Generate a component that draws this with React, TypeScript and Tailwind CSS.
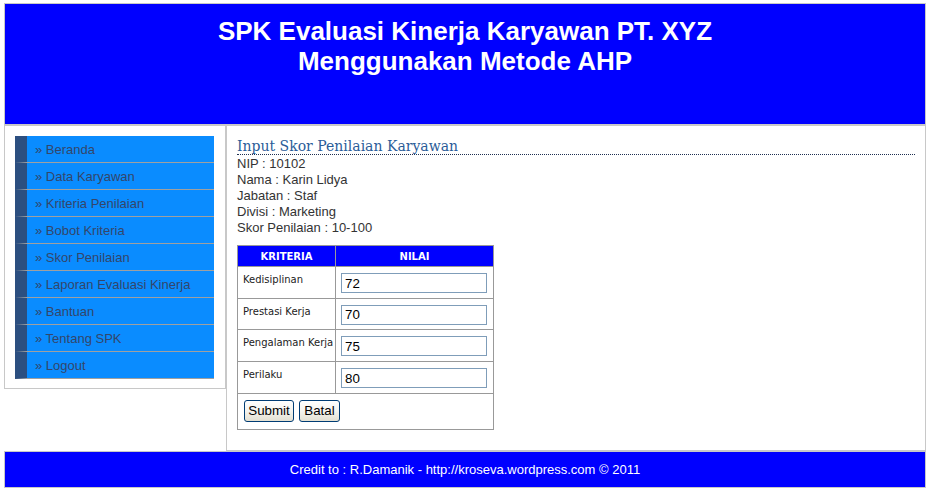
const menu = [
  'Beranda',
  'Data Karyawan',
  'Kriteria Penilaian',
  'Bobot Kriteria',
  'Skor Penilaian',
  'Laporan Evaluasi Kinerja',
  'Bantuan',
  'Tentang SPK',
  'Logout',
];

const skor = [
  { kriteria: 'Kedisiplinan', nilai: '72' },
  { kriteria: 'Prestasi Kerja', nilai: '70' },
  { kriteria: 'Pengalaman Kerja', nilai: '75' },
  { kriteria: 'Perilaku', nilai: '80' },
];

function XpButton({ label, width }: { label: string; width: string }) {
  return (
    <button
      type="button"
      className={`${width} h-[22px] rounded-[3px] border border-[#003c74] bg-gradient-to-b from-[#ffffff] via-[#f4f3ee] to-[#e3e0d2] text-[13.33px] leading-[18px] text-black font-['Liberation_Sans',Arial,sans-serif]`}
    >
      {label}
    </button>
  );
}

export default function App() {
  return (
    <div className="min-h-[493px] bg-white font-['Liberation_Sans',Arial,sans-serif]">
      <div className="ml-[4px] w-[922px] pt-[3px]">
        {/* Header */}
        <header className="h-[123px] border border-b-2 border-[#c8c8c8] bg-[#0000ff] pt-[12px] text-center text-[26px] font-bold leading-[30px] text-white">
          <h1>SPK Evaluasi Kinerja Karyawan PT. XYZ</h1>
          <h1>Menggunakan Metode AHP</h1>
        </header>

        <div className="flex items-start">
          {/* Sidebar */}
          <aside className="w-[222px] border-x border-b border-[#c8c8c8] pt-[10px] pb-[9px]">
            <ul className="ml-[10px] w-[199px]">
              {menu.map((item) => (
                <li
                  key={item}
                  className="h-[27px] border-b border-l-[12px] border-b-[#a0a0a0] border-l-[#2c4f80] bg-[#0a8cff] pl-[8px] pt-[1px] text-[13px] leading-[25px] text-[#34466a]"
                >
                  » {item}
                </li>
              ))}
            </ul>
          </aside>

          {/* Content */}
          <main className="h-[325px] w-[700px] border-x border-b border-[#c8c8c8] px-[10px] pt-[12px]">
            <h2 className="border-b border-dotted border-[#1e2f50] font-['DejaVu_Serif',serif] text-[14px] leading-[16px] text-[#2a5c98]">
              Input Skor Penilaian Karyawan
            </h2>
            <div className="mt-[1px] text-[13px] leading-[16px] text-[#333]">
              <p>NIP : 10102</p>
              <p>Nama : Karin Lidya</p>
              <p>Jabatan : Staf</p>
              <p>Divisi : Marketing</p>
              <p>Skor Penilaian : 10-100</p>
            </div>

            <table className="mt-[9px] w-[257px] border-collapse border border-[#999] font-['DejaVu_Sans',sans-serif]">
              <thead>
                <tr className="h-[21px] bg-[#0000ff] text-[10px] font-bold text-white">
                  <th className="w-[98px] border border-[#999] p-0 text-center">KRITERIA</th>
                  <th className="border border-[#999] p-0 text-center">NILAI</th>
                </tr>
              </thead>
              <tbody>
                {skor.map((row) => (
                  <tr key={row.kriteria} className="h-[31.7px]">
                    <td className="border border-[#999] pl-[5px] pt-[6px] align-top text-[10px] leading-[14px] text-[#222]">
                      {row.kriteria}
                    </td>
                    <td className="border border-[#999] pl-[5px] pt-[6px] align-top">
                      <input
                        type="text"
                        defaultValue={row.nilai}
                        className="block h-[20px] w-[146px] border border-[#7f9db9] bg-white pl-[3px] font-['Liberation_Sans',Arial,sans-serif] text-[13.33px] text-black outline-none"
                      />
                    </td>
                  </tr>
                ))}
                <tr className="h-[36px]">
                  <td colSpan={2} className="border border-[#999] pl-[6px] pt-[6px] align-top">
                    <div className="flex gap-[5px]">
                      <XpButton label="Submit" width="w-[50px]" />
                      <XpButton label="Batal" width="w-[41px]" />
                    </div>
                  </td>
                </tr>
              </tbody>
            </table>
          </main>
        </div>

        {/* Footer */}
        <footer className="flex h-[37px] items-center justify-center border border-[#c8c8c8] bg-[#0000ff] text-[13px] text-white">
          Credit to : R.Damanik - http://kroseva.wordpress.com © 2011
        </footer>
      </div>
    </div>
  );
}
